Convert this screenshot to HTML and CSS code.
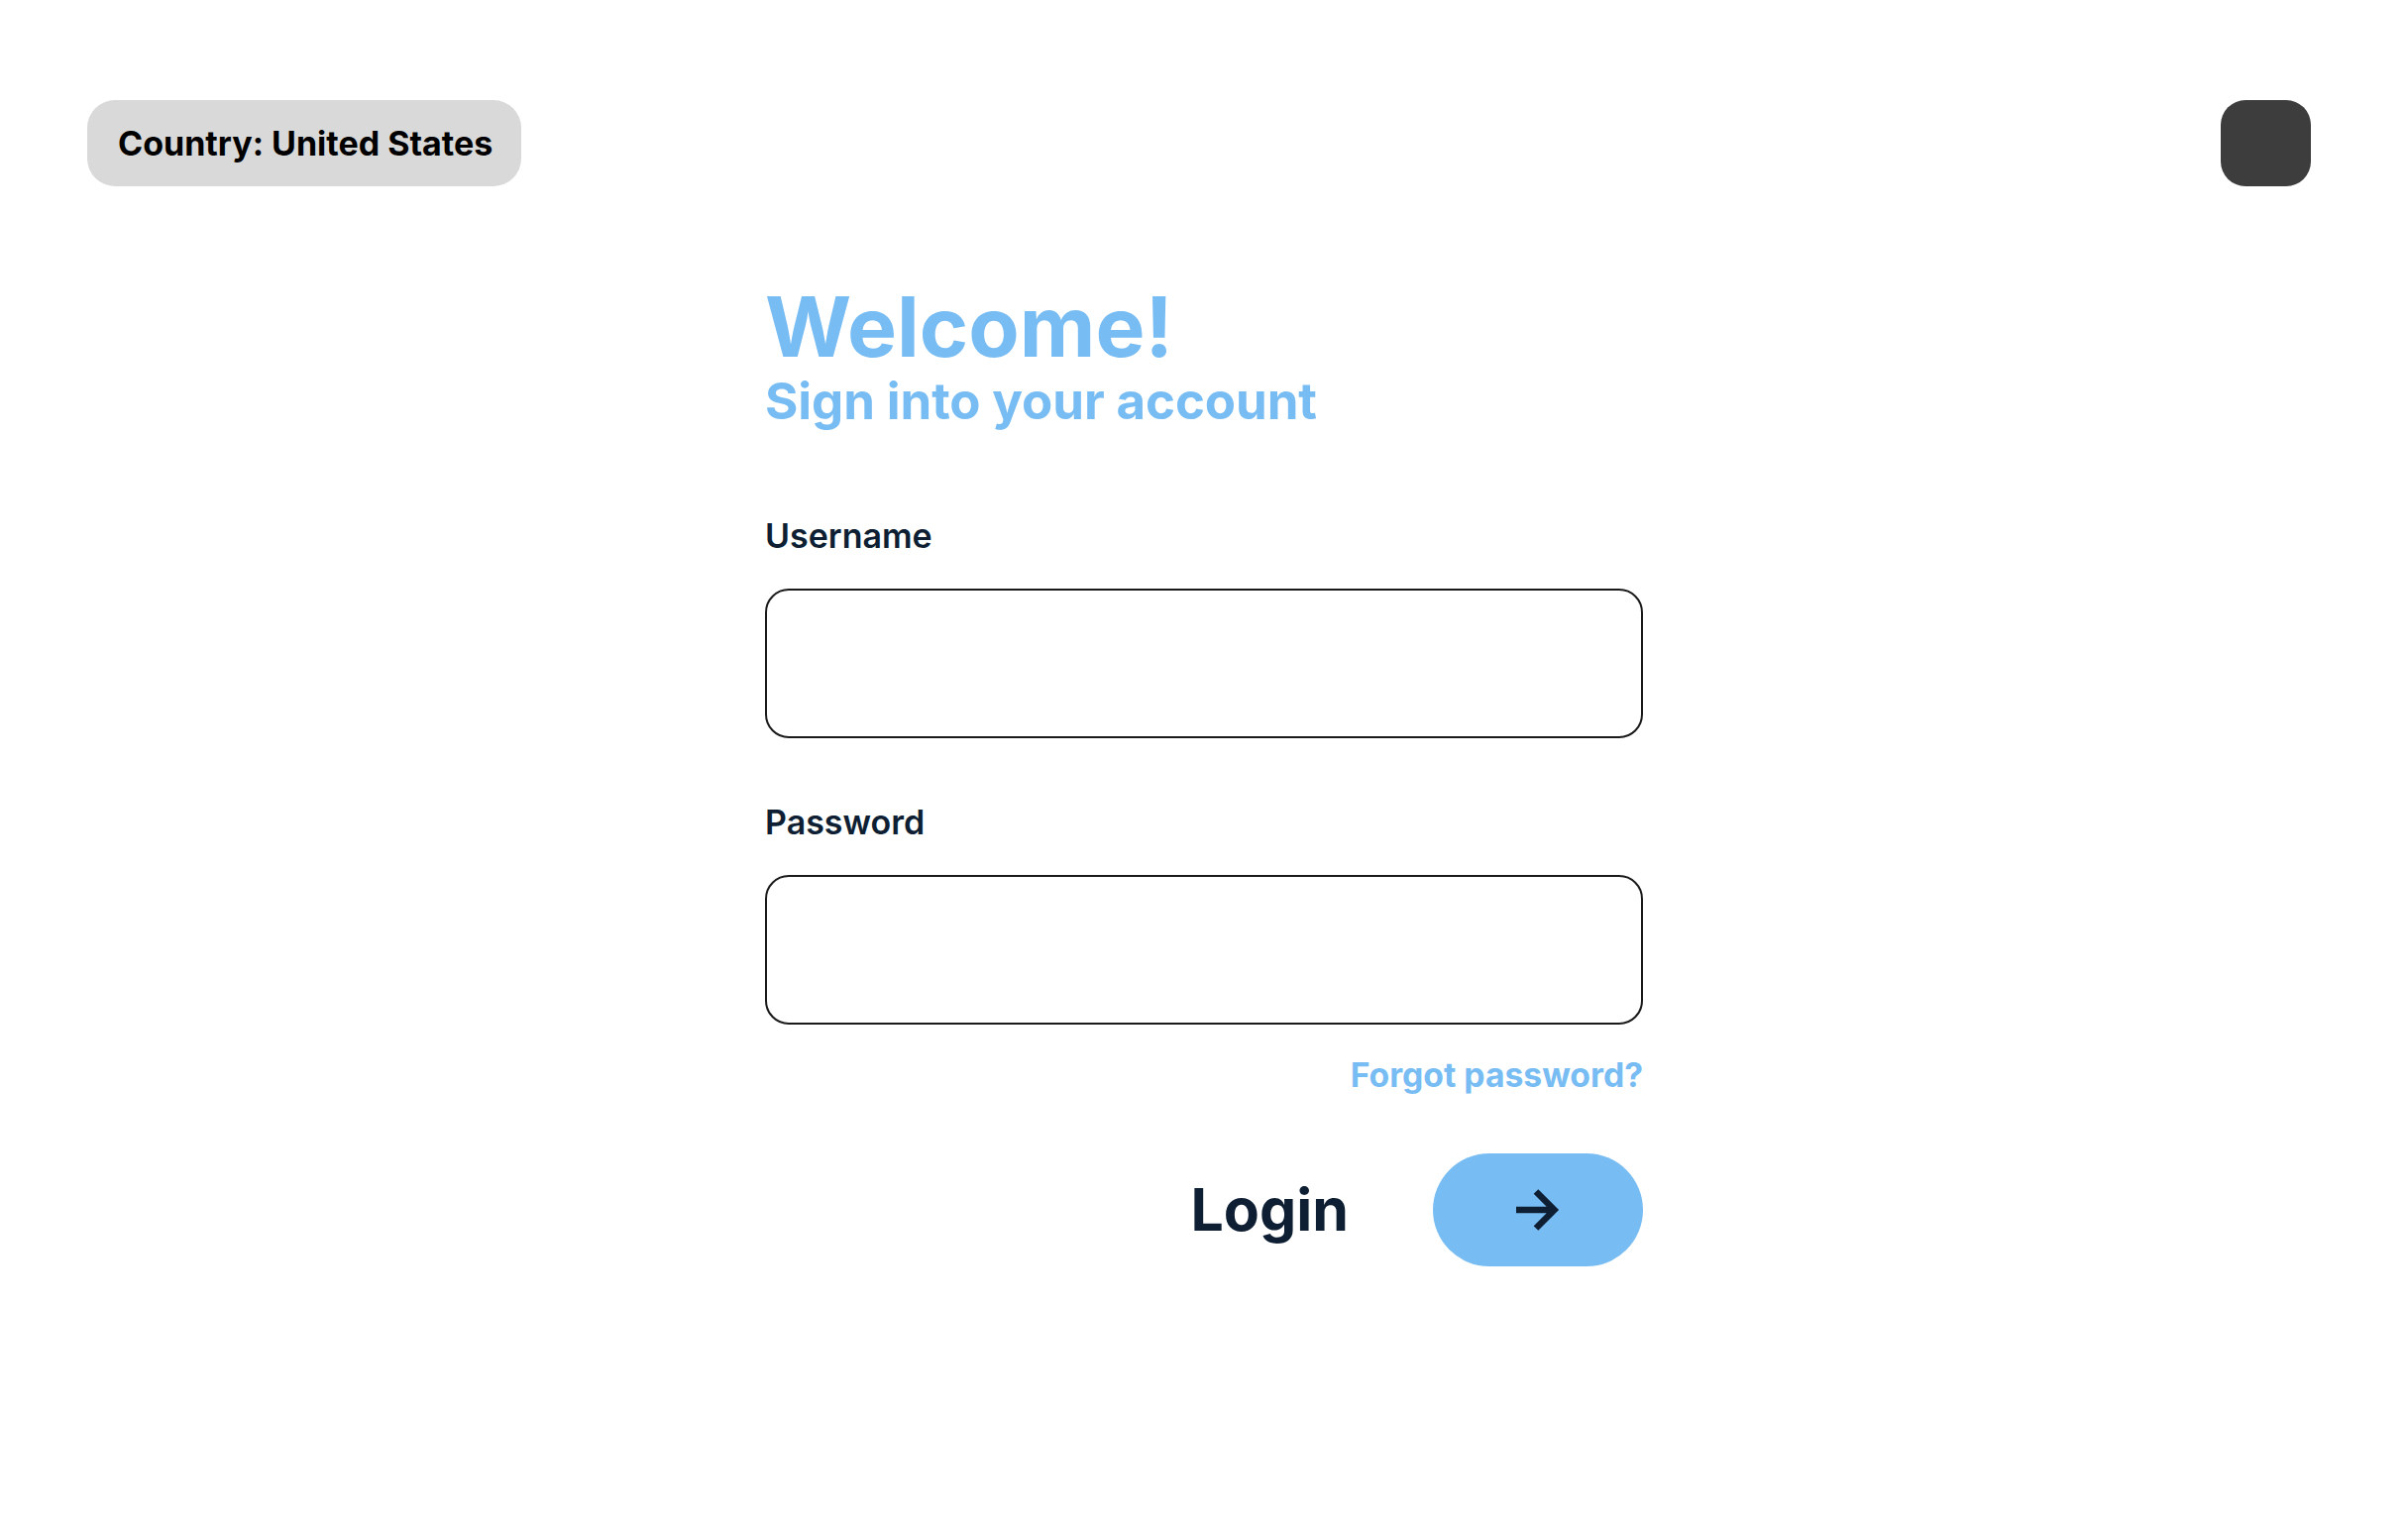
FILE: index.html
```html
<!DOCTYPE html>
<html lang="en">
<head>
<meta charset="utf-8">
<title>Sign in</title>
<link rel="stylesheet" href="styles.css">
</head>
<body>
<header class="topbar">
  <div class="country-pill">Country: United States</div>
  <div class="menu-square"></div>
</header>
<main class="login">
  <h1 class="welcome">Welcome!</h1>
  <h2 class="subtitle">Sign into your account</h2>
  <form class="form">
    <label class="field-label" for="username">Username</label>
    <input class="field-input" id="username" type="text">
    <label class="field-label field-label--second" for="password">Password</label>
    <input class="field-input" id="password" type="password">
    <div class="forgot-row"><a class="forgot" href="#">Forgot password?</a></div>
    <div class="submit-row">
      <span class="login-text">Login</span>
      <button class="login-button" type="button" aria-label="Login">
        <svg class="arrow" viewBox="0 0 44 44" width="44" height="44"><path d="M0 22H39M20 3.5L38.5 22L20 40.5" fill="none" stroke="#0e1f33" stroke-width="6.5" stroke-linejoin="miter" stroke-linecap="butt"/></svg>
      </button>
    </div>
  </form>
</main>
</body>
</html>
```

FILE: styles.css
```css
* { box-sizing: border-box; }
html, body { margin: 0; padding: 0; background: #ffffff; }
body {
  font-family: Inter, "Noto Sans", "Liberation Sans", sans-serif;
  color: #0e1f33;
  width: 2430px;
  min-height: 1538px;
}
.topbar {
  display: flex;
  justify-content: space-between;
  align-items: flex-start;
  padding: 101px 98px 0 88px;
}
.country-pill {
  height: 87px;
  display: flex;
  align-items: center;
  padding: 0 29px 0 31px;
  background: #d9d9d9;
  border-radius: 28px;
  font-size: 34px;
  font-weight: 700;
  color: #000000;
  line-height: 1;
}
.menu-square {
  width: 91px;
  height: 87px;
  background: #3d3d3d;
  border-radius: 25px;
}
.login {
  width: 886px;
  margin: 0 auto;
}
.welcome {
  margin: 100px 0 0 0;
  font-size: 84px;
  line-height: 84px;
  font-weight: 700;
  color: #77bcf3;
  letter-spacing: 0;
}
.subtitle {
  margin: 7px 0 0 0;
  font-size: 51px;
  line-height: 51px;
  font-weight: 700;
  color: #77bcf3;
  letter-spacing: -0.1px;
}
.form {
  display: flex;
  flex-direction: column;
}
.field-label {
  display: block;
  margin-top: 94px;
  font-size: 34px;
  line-height: 34px;
  font-weight: 600;
  color: #0e1f33;
}
.field-label--second { margin-top: 68px; }
.field-input {
  display: block;
  width: 886px;
  height: 151px;
  margin-top: 36px;
  border: 2px solid #1a1a1a;
  border-radius: 24px;
  background: #ffffff;
  font-family: inherit;
  font-size: 34px;
  padding: 0 30px;
  outline: none;
}
.forgot-row {
  display: flex;
  justify-content: flex-end;
  margin-top: 34px;
}
.forgot {
  font-size: 33.7px;
  line-height: 33px;
  font-weight: 700;
  color: #77bcf3;
  text-decoration: none;
}
.submit-row {
  display: flex;
  justify-content: flex-end;
  align-items: center;
  gap: 85px;
  margin-top: 63px;
}
.login-text {
  font-size: 59px;
  line-height: 60px;
  font-weight: 700;
  color: #0e1f33;
  letter-spacing: 0;
}
.login-button {
  width: 212px;
  height: 114px;
  border: none;
  border-radius: 57px;
  background: #77bcf3;
  display: flex;
  align-items: center;
  justify-content: center;
  padding: 0;
  cursor: pointer;
}
.arrow { display: block; }
```
